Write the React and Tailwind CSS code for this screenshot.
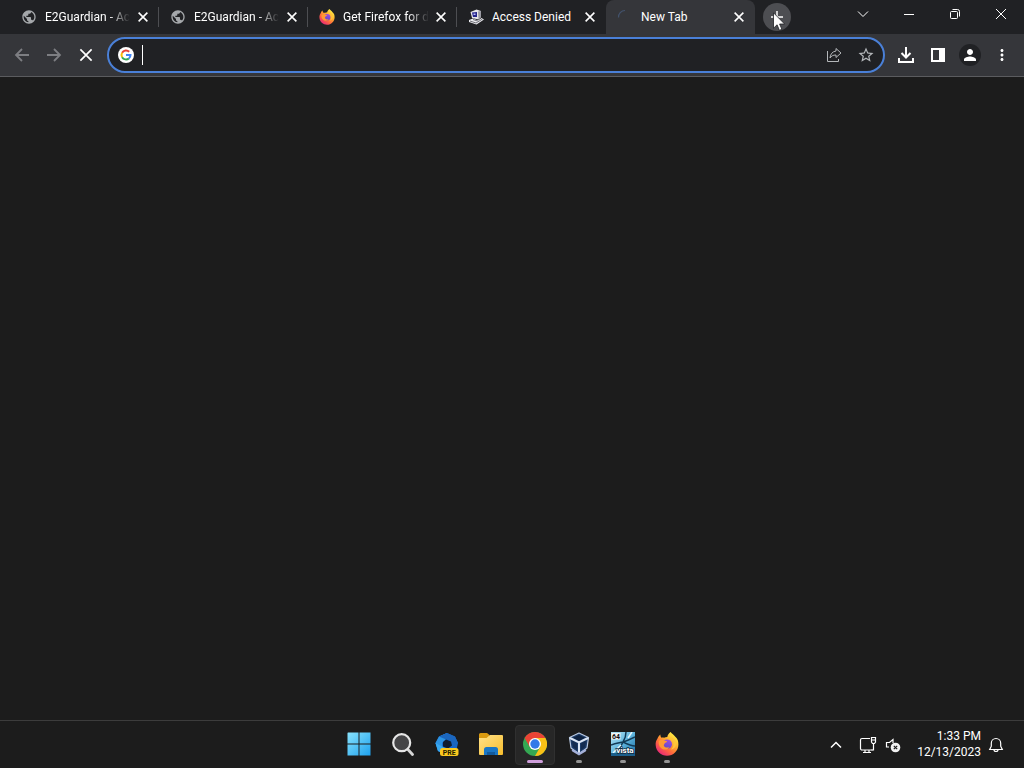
import { MdMoreVert, MdPerson, MdPublic, MdStarBorder } from "react-icons/md"

const TABS = [
  { id: 1, title: "E2Guardian - Ac", icon: GlobeIcon, faded: true },
  { id: 2, title: "E2Guardian - Ac", icon: GlobeIcon, faded: true },
  { id: 3, title: "Get Firefox for d", icon: FirefoxSmall, faded: true },
  { id: 4, title: "Access Denied", icon: PixelComputerIcon },
  { id: 5, title: "New Tab", icon: SpinnerIcon, active: true },
]

const APPS = [
  { name: "Start", icon: WindowsIcon },
  { name: "Search", icon: SearchIcon },
  { name: "Copilot", icon: PreviewIcon },
  { name: "File Explorer", icon: FolderIcon },
  { name: "Google Chrome", icon: ChromeIcon, active: true },
  { name: "VirtualBox", icon: VirtualBoxIcon, running: true },
  { name: "Vista 64", icon: VistaIcon, running: true },
  { name: "Firefox", icon: FirefoxIcon, running: true },
]

function GlobeIcon() {
  return <MdPublic className="size-4 text-[#a5a8ab]" />
}

function Firefox({ id, className }) {
  return (
    <svg viewBox="0 0 24 24" className={className} aria-hidden="true">
      <defs>
        <linearGradient id={`${id}-body`} x1="0.85" y1="0.1" x2="0.2" y2="0.95">
          <stop offset="0" stopColor="#fff044" />
          <stop offset="0.35" stopColor="#ffb02e" />
          <stop offset="0.65" stopColor="#ff6a3c" />
          <stop offset="1" stopColor="#e8257a" />
        </linearGradient>
        <linearGradient id={`${id}-orb`} x1="0.7" y1="0" x2="0.3" y2="1">
          <stop offset="0" stopColor="#a04be0" />
          <stop offset="1" stopColor="#5b4ac8" />
        </linearGradient>
      </defs>
      <path
        fill={`url(#${id}-body)`}
        d="M22.8 8.300c-.5-1.400-1.500-2.700-2.500-3.500C19 2.800 16.800 2 15.600.1c-1.800 1.400-3 3-3.300 4.900-1.200 0-2.300.3-3.300.8-.9-.3-1.700-.2-2.300 0C5.800 5 5.300 3.800 5.400 2.400 3.800 3.500 3 5 2.500 6.500.900 8.700.5 11 .7 13.200 1.100 19.200 6 23.700 12 23.700c6.300 0 11.400-5 11.400-11.300 0-1.500-.2-2.900-.6-4.100z"
      />
      <circle cx="12.200" cy="12.200" r="4.800" fill={`url(#${id}-orb)`} />
      <path
        fill="#ff9a33"
        d="M3.800 9c1.600-1.300 3.500-1.500 5-.7 1 .6 2.100.7 3.300.9-.2 1.100-1.500 1.400-2.300 2-.6.500-.3 1.300-1.100 1.700.4 2.500 3.400 3.400 5.700 2.100-1.300 3-5.800 3.500-8.300 1C4.200 14.600 3.300 11.600 3.800 9z"
      />
      <path fill="#ffc53a" d="M13 5c3.500.8 5.600 3.400 5.500 7 0 2.500-1 4.300-2.700 5.600 3.700-.7 5.700-3.300 5.400-6.600C20.800 7.500 17.500 5 13 5z" />
    </svg>
  )
}

function FirefoxSmall() {
  return <Firefox id="fx-tab" className="size-4" />
}

function FirefoxIcon() {
  return <Firefox id="fx-task" className="size-6" />
}

function PixelComputerIcon() {
  return (
    <svg viewBox="0 0 16 16" className="size-4" aria-hidden="true">
      <path d="M2.500 3l6-2.500L13 2v6l-2.500 2.500L4 9z" fill="#e6e6ea" />
      <path d="M10 2.500L13 2v6l-2.500 2.500z" fill="#9b9ba3" />
      <path d="M4 3.500l5-.5v5L5 8z" fill="#24248a" />
      <path d="M5.500 4.500h2v1.500h-2z" fill="#b9b9ff" />
      <path d="M1 11l4-1.500 5 2 3.500-2.500L16 10.500 8.500 15.500 1 13z" fill="#ececf0" />
      <path d="M2 12l6 2 6.500-4M5 10.500l4.500 1.500" stroke="#707078" strokeWidth="1" fill="none" />
    </svg>
  )
}

function SpinnerIcon() {
  return (
    <svg viewBox="0 0 16 16" className="size-4" fill="none" aria-hidden="true">
      <path d="M1.500 8.500A6.500 6.500 0 0 1 8 1.500" stroke="#43536d" strokeWidth="1.200" />
    </svg>
  )
}

function GoogleIcon() {
  return (
    <svg viewBox="0 0 16 16" className="size-4 shrink-0" aria-hidden="true">
      <circle cx="8" cy="8" r="8" fill="#fff" />
      <g fill="none" strokeWidth="2">
        <path d="M11.200 4.800A4.500 4.500 0 0 0 4.100 5.800" stroke="#ea4335" />
        <path d="M4.100 5.750a4.500 4.500 0 0 0 0 4.500" stroke="#fbbc05" />
        <path d="M4.100 10.200a4.500 4.500 0 0 0 6.800 1.200" stroke="#34a853" />
        <path d="M8 8h4.500a4.500 4.500 0 0 1-1.600 3.400" stroke="#4285f4" />
      </g>
    </svg>
  )
}

function CloseIcon({ className }) {
  return (
    <svg viewBox="0 0 16 16" className={className} fill="none" stroke="currentColor" aria-hidden="true">
      <path d="M3 3l10 10M13 3L3 13" />
    </svg>
  )
}

function ArrowIcon({ className }) {
  return (
    <svg viewBox="0 0 16 16" className={className} fill="none" stroke="currentColor" strokeWidth="1.800" aria-hidden="true">
      <path d="M15 8H2.500M8 2L2 8l6 6" />
    </svg>
  )
}

function ShareIcon() {
  return (
    <svg viewBox="0 0 16 16" className="size-4" fill="none" stroke="currentColor" strokeWidth="1" aria-hidden="true">
      <path d="M1.500 4v10.500h11V12" />
      <path d="M10 1.500l5 4.500-5 4.500V8C7 8 5.200 9 4 11c.3-4 2.500-6.500 6-7z" />
    </svg>
  )
}

function DownloadIcon() {
  return (
    <svg viewBox="0 0 18 18" className="size-[18px]" fill="none" stroke="currentColor" strokeWidth="2" aria-hidden="true">
      <path d="M9 1v10M4.500 7L9 11.500 13.500 7M2 12v4h14v-4" />
    </svg>
  )
}

function SidePanelIcon() {
  return (
    <svg viewBox="0 0 14 14" className="size-3.5" aria-hidden="true">
      <path fill="currentColor" fillRule="evenodd" d="M0 0h14v14H0zM2 2v10h6V2z" />
    </svg>
  )
}

function WindowsIcon() {
  return (
    <svg viewBox="0 0 24 24" className="size-6" aria-hidden="true">
      <defs>
        <linearGradient id="win" x1="0" y1="0" x2="24" y2="24" gradientUnits="userSpaceOnUse">
          <stop offset="0" stopColor="#8be4fd" />
          <stop offset="1" stopColor="#1ba0ee" />
        </linearGradient>
      </defs>
      <path fill="url(#win)" d="M1 .5h10.500v11H.5V1zM12.500.5H23.500v11h-11zM.5 12.500h11v11H.5zM12.500 12.500h11v11h-11z" />
    </svg>
  )
}

function SearchIcon() {
  return (
    <svg viewBox="0 0 24 24" className="size-6" fill="none" aria-hidden="true">
      <path d="M16.500 17l5 5.500" stroke="#d6d6d6" strokeWidth="2.800" strokeLinecap="round" />
      <circle cx="10.700" cy="10.700" r="8.500" fill="#454547" stroke="#e6e6e6" strokeWidth="2.200" />
    </svg>
  )
}

function PreviewIcon() {
  return (
    <svg viewBox="0 0 24 24" className="size-6" aria-hidden="true">
      <path d="M12 1l8 3.500 3 6.500-2 9-9 3-9-4L.5 11 4 4.500z" fill="#1766c8" />
      <path d="M12 1L4 4.500.5 11 3 19l5 2-1-10 4-4z" fill="#2d93e2" />
      <path d="M4 4.500L12 1l8 3.500 3 6.500-4 4-3-6-6-2z" fill="#1b66be" />
      <path d="M.5 11L3 19l9 4 3-5-7-3z" fill="#38a8ef" />
      <path d="M11 7.500l5 2 1 4-4 3-5-2V10z" fill="#101d30" />
      <rect x="5" y="16" width="18.500" height="8" rx="2.500" fill="#fcc91f" />
      <text x="14.300" y="22.500" textAnchor="middle" fontSize="7" fontWeight="700" fill="#241c00" fontFamily="Roboto, sans-serif">
        PRE
      </text>
    </svg>
  )
}

function FolderIcon() {
  return (
    <svg viewBox="0 0 26 24" className="h-6 w-[26px]" aria-hidden="true">
      <defs>
        <linearGradient id="folder" x1="0" y1="0" x2="1" y2="1">
          <stop offset="0" stopColor="#ffe28a" />
          <stop offset="1" stopColor="#f7bd2c" />
        </linearGradient>
      </defs>
      <path d="M1 2.500A1.500 1.500 0 0 1 2.500 1H9l2.500 2v4H1z" fill="#d99a10" />
      <path d="M1 6h7.500L12 3h12a1 1 0 0 1 1 1v18a1 1 0 0 1-1 1H2a1 1 0 0 1-1-1z" fill="url(#folder)" />
      <path d="M6 23v-5.500A2.500 2.500 0 0 1 8.500 15h9a2.500 2.500 0 0 1 2.500 2.500V23z" fill="#1976c5" />
      <path d="M9 23v-3h8v3z" fill="#125a9c" />
    </svg>
  )
}

function ChromeIcon() {
  return (
    <svg viewBox="0 0 24 24" className="size-6" aria-hidden="true">
      <circle cx="12" cy="12" r="12" fill="#34a853" />
      <path d="M1.600 6A12 12 0 0 1 22.400 6H12l-5.200 9z" fill="#ea4335" />
      <path d="M22.400 6A12 12 0 0 1 12 24l5.200-9L12 6z" fill="#fbc116" />
      <circle cx="12" cy="12" r="6" fill="#fff" />
      <circle cx="12" cy="12" r="4.700" fill="#3279e8" />
    </svg>
  )
}

function VirtualBoxIcon() {
  return (
    <svg viewBox="0 0 24 24" className="size-6" aria-hidden="true">
      <path d="M12 1l9.500 4.500L20 16l-8 6-8-6L2.500 5.500z" fill="#1d3c68" stroke="#b9c9e2" strokeWidth="1.200" strokeLinejoin="round" />
      <path d="M12 3l6 2.700L12 9 6 5.700z" fill="#0d2140" />
      <path d="M3 6l9 4.500L21 6M12 10.500V21" fill="none" stroke="#dce6f4" strokeWidth="2" />
      <path d="M5 8.800l5 2.700v6.500l-4-3zM19 8.800l-5 2.700v6.500l4-3z" fill="#142c50" />
      <path d="M6 18.500l6 3.500 6-3.500" fill="none" stroke="#a3afd8" strokeWidth="2.500" strokeLinecap="round" />
    </svg>
  )
}

function VistaIcon() {
  return (
    <svg viewBox="0 0 24 24" className="size-6" aria-hidden="true">
      <defs>
        <linearGradient id="vista" x1="0" y1="0" x2="1" y2="1">
          <stop offset="0" stopColor="#b8e6f5" />
          <stop offset="0.500" stopColor="#5fb5de" />
          <stop offset="1" stopColor="#156a9f" />
        </linearGradient>
      </defs>
      <rect width="24" height="24" fill="url(#vista)" />
      <path d="M15 0c0 5-1 7-3 10S8 18 7 22M0 13c5-2 8-2 12-3s8-3 12-5M12 10c4 2 8 4 12 4" fill="none" stroke="#123a56" strokeWidth="1.500" />
      <path d="M17 6l4-6M2 21l8-8" stroke="#e3f6ff" strokeWidth="1.500" />
      <path d="M0 21h24v3H0z" fill="#1b5f8b" />
      <rect x="0.500" y="1" width="9" height="6.500" fill="#f4f4f4" />
      <g fontFamily="Roboto, sans-serif" fontWeight="700">
        <text x="5" y="6.700" textAnchor="middle" fontSize="7" fill="#111">64</text>
        <text x="14" y="20.500" textAnchor="middle" fontSize="8" fill="#fff" stroke="#10293d" strokeWidth="1.500" paintOrder="stroke">vista</text>
      </g>
    </svg>
  )
}

function NetworkIcon() {
  return (
    <svg viewBox="0 0 18 18" className="size-[18px]" fill="none" stroke="currentColor" strokeWidth="1.200" aria-hidden="true">
      <path d="M11 2.500H3A1.500 1.500 0 0 0 1.500 4v8.500A1.500 1.500 0 0 0 3 14h10.500M6 14v2.500M10 14v2.500M4 16.500h8" />
      <path d="M12.500 1.500h4V6l-1 1.500h-2l-1-1.500zM12.500 4h4M14.500 7.500V14h-2" />
    </svg>
  )
}

function MutedIcon() {
  return (
    <svg viewBox="0 0 16 16" className="size-4" fill="none" aria-hidden="true">
      <path d="M8 6V2.500L4.500 5.500h-3V10H4" stroke="currentColor" strokeWidth="1.200" />
      <circle cx="10.500" cy="10.500" r="4.800" fill="#f2f2f2" />
      <path d="M8.800 8.800l3.400 3.400M12.200 8.800l-3.400 3.400" stroke="#1c1c1c" strokeWidth="1.200" />
    </svg>
  )
}

function BellIcon() {
  return (
    <svg viewBox="0 0 16 16" className="size-4" fill="none" stroke="currentColor" strokeWidth="1.200" aria-hidden="true">
      <path d="M8 1.500a4.700 4.700 0 0 0-4.700 4.700v3L1.700 12.500h12.600l-1.600-3.300v-3A4.700 4.700 0 0 0 8 1.500zM6 12.500a2 2 0 0 0 4 0" />
    </svg>
  )
}

function Tab({ tab }) {
  const Icon = tab.icon
  return (
    <div
      className={
        tab.active
          ? "flex w-[149px] items-center rounded-t-lg bg-[#35363a] pr-[9px] pl-[11px]"
          : "flex w-[149px] items-center pl-[11px]"
      }
    >
      <button role="tab" aria-selected={!!tab.active} className="flex min-w-0 flex-1 items-center gap-2 text-left">
        <span className="shrink-0">
          <Icon />
        </span>
        <span
          className={
            tab.faded
              ? "flex-1 whitespace-nowrap [mask-image:linear-gradient(to_right,black_75%,transparent)]"
              : "flex-1 whitespace-nowrap"
          }
        >
          {tab.title}
        </span>
      </button>
      <button aria-label={`Close ${tab.title}`} className="ml-1.5 shrink-0">
        <CloseIcon className="size-3.5 stroke-[1.8]" />
      </button>
      {!tab.active && (
        <span className={tab.id === 4 ? "ml-[9px]" : "ml-2 h-5 w-px bg-[#4d4e52]"} />
      )}
    </div>
  )
}

function TabStrip() {
  return (
    <header className="flex h-[34px] bg-[#202124] font-[Roboto,sans-serif] text-xs">
      <div role="tablist" className="flex pl-2.5">
        {TABS.map((tab) => (
          <Tab key={tab.id} tab={tab} />
        ))}
      </div>
      <div className="relative ml-2 flex items-center">
        <button aria-label="New tab" className="flex size-7 items-center justify-center rounded-full bg-[#4d4e52]">
          <svg viewBox="0 0 12 12" className="size-3" fill="none" stroke="currentColor" strokeWidth="1.500" aria-hidden="true">
            <path d="M6 0v12M0 6h12" />
          </svg>
        </button>
        {/* mouse pointer */}
        <svg viewBox="0 0 12 19" className="absolute top-3 left-2.5 h-[19px] w-3" aria-hidden="true">
          <path d="M.5.8v15.400l3.600-3.400 2.300 5.500 2.500-1-2.300-5.300h5z" fill="#fff" stroke="#202124" strokeWidth="0.800" />
        </svg>
      </div>
      <div className="ml-auto flex h-7">
        <button aria-label="Search tabs" className="flex w-[46px] items-center justify-center">
          <svg viewBox="0 0 12 12" className="size-3" fill="none" stroke="currentColor" aria-hidden="true">
            <path d="M1 3.500l5 5 5-5" />
          </svg>
        </button>
        <button aria-label="Minimize" className="flex w-[46px] items-center justify-center">
          <span className="h-px w-2.5 bg-white" />
        </button>
        <button aria-label="Restore" className="flex w-[46px] items-center justify-center">
          <svg viewBox="0 0 12 12" className="size-3" fill="none" stroke="currentColor" aria-hidden="true">
            <rect x="1.500" y="3.500" width="7" height="7" rx="1" />
            <path d="M3.500 1.500h5a2 2 0 0 1 2 2v5" />
          </svg>
        </button>
        <button aria-label="Close window" className="flex w-[46px] items-center justify-center">
          <CloseIcon className="size-4" />
        </button>
      </div>
    </header>
  )
}

function ToolButton({ label, children, className = "text-white" }) {
  return (
    <button aria-label={label} className={`flex size-7 items-center justify-center rounded-full ${className}`}>
      {children}
    </button>
  )
}

function Toolbar() {
  return (
    <nav className="flex h-[43px] items-center gap-[7px] border-b border-[#5b5c5f] bg-[#35363a] px-2">
      <div className="flex gap-1">
        <ToolButton label="Back" className="text-[#7d7e82]">
          <ArrowIcon className="size-4" />
        </ToolButton>
        <ToolButton label="Forward" className="text-[#7d7e82]">
          <ArrowIcon className="size-4 rotate-180" />
        </ToolButton>
        <ToolButton label="Stop loading">
          <CloseIcon className="size-[18px] stroke-[1.5]" />
        </ToolButton>
      </div>
      <div className="flex h-9 flex-1 items-center rounded-full border-2 border-[#4a80d8] bg-[#202124] pr-[3px] pl-[9px]">
        <GoogleIcon />
        <span className="ml-2 h-5 w-px bg-white" />
        <input
          type="text"
          aria-label="Search Google or type a URL"
          className="min-w-0 flex-1 bg-transparent text-sm caret-transparent outline-none"
        />
        <div className="flex gap-1 text-[#b4b7ba]">
          <ToolButton label="Share this page" className="">
            <ShareIcon />
          </ToolButton>
          <ToolButton label="Bookmark this tab" className="">
            <MdStarBorder className="size-[18px]" />
          </ToolButton>
        </div>
      </div>
      <div className="flex gap-1">
        <ToolButton label="Downloads">
          <DownloadIcon />
        </ToolButton>
        <ToolButton label="Side panel">
          <SidePanelIcon />
        </ToolButton>
        <ToolButton label="Profile">
          <span className="flex size-[22px] items-center justify-center rounded-full bg-[#202124]">
            <MdPerson className="size-[18px]" />
          </span>
        </ToolButton>
        <ToolButton label="Menu">
          <MdMoreVert className="size-[18px]" />
        </ToolButton>
      </div>
    </nav>
  )
}

function AppButton({ app }) {
  const Icon = app.icon
  return (
    <button
      aria-label={app.name}
      className={
        app.active
          ? "flex size-10 flex-col items-center rounded border border-[#303030] bg-[#272727] pt-1.5"
          : "flex size-10 flex-col items-center pt-[7px]"
      }
    >
      <Icon />
      {app.active && <span className="mt-1 h-[3px] w-4 rounded-full bg-[#cf9fdc]" />}
      {app.running && <span className="mt-1 h-[3px] w-1.5 rounded-full bg-[#949494]" />}
    </button>
  )
}

function Taskbar() {
  return (
    <footer className="grid h-12 grid-cols-[1fr_auto_1fr] items-center border-t border-[#3c3c3c] bg-[#1c1c1c]">
      <div />
      <div className="flex gap-1 pl-0.5">
        {APPS.map((app) => (
          <AppButton key={app.name} app={app} />
        ))}
      </div>
      <div className="flex items-center justify-end pr-5">
        <button aria-label="Show hidden icons" className="mr-[17px]">
          <svg viewBox="0 0 12 12" className="size-3" fill="none" stroke="currentColor" strokeWidth="1.500" aria-hidden="true">
            <path d="M1 8.500l5-5 5 5" />
          </svg>
        </button>
        <button aria-label="Network and volume" className="mr-4 flex items-center gap-2">
          <NetworkIcon />
          <MutedIcon />
        </button>
        <button className="mr-[7px] pb-0.5 text-right font-[Roboto,sans-serif] text-xs leading-4">
          <span className="block">1:33 PM</span>
          <span className="block">12/13/2023</span>
        </button>
        <button aria-label="Notifications">
          <BellIcon />
        </button>
      </div>
    </footer>
  )
}

export default function App() {
  return (
    <div className="flex min-h-screen flex-col bg-[#1c1c1c] font-[Roboto,sans-serif] text-white">
      <TabStrip />
      <Toolbar />
      <main className="flex-1" />
      <Taskbar />
    </div>
  )
}
